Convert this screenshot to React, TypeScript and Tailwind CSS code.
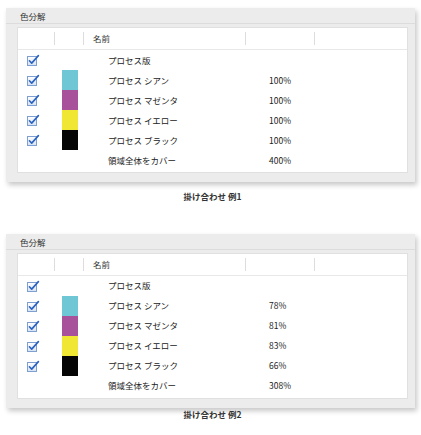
import React from 'react';

interface Row {
  name: string;
  swatch?: string;
  value?: string;
  checked: boolean;
}

interface Props {
  rows: Row[];
  caption: string;
  captionGap: string;
  top: string;
}

function CheckIcon() {
  return (
    <svg width="13" height="12" viewBox="0 0 13 12" aria-hidden>
      <defs>
        <linearGradient id="cbfill" x1="0" y1="0" x2="0" y2="1">
          <stop offset="0" stopColor="#ffffff" />
          <stop offset="1" stopColor="#d6e2f2" />
        </linearGradient>
      </defs>
      <rect x="0.5" y="2.5" width="9" height="9" fill="url(#cbfill)" stroke="#7f9fd0" />
      <path d="M2.4 6.8 L4.7 9.1 L11.4 1.6" fill="none" stroke="#2a62c0" strokeWidth="1.6" strokeLinecap="round" strokeLinejoin="round" />
    </svg>
  );
}

function SeparationPanel({ rows, caption, captionGap, top }: Props) {
  return (
    <div className={top}>
      <div className="ml-[6px] w-[409px] bg-[#ececec] shadow-[2px_3px_5px_rgba(0,0,0,0.22)]">
        <div className="h-[16px] pl-[14px] border-b border-[#dcdcdc] flex items-end text-[8.5px] leading-[14px] text-[#333]">
          色分解
        </div>
        <div className="pt-[3px] pl-[11px] pr-[7px] pb-[9px]">
          <div className="bg-white border border-[#e0e0e0]">
            <div className="flex h-[22px] border-b border-[#e8e8e8] text-[8.5px] text-[#333]">
              <div className="w-[37px] border-r border-[#dddddd] my-[4px]" />
              <div className="w-[29px] border-r border-[#dddddd] my-[4px]" />
              <div className="w-[162px] border-r border-[#dddddd] my-[4px] pl-[9px] flex items-center">名前</div>
              <div className="w-[69px] border-r border-[#dddddd] my-[4px]" />
              <div className="flex-1" />
            </div>
            <div className="pb-[2px]">
              {rows.map((r) => (
                <div key={r.name} className="flex h-[20px] items-center text-[8.5px] text-[#222]">
                  <div className="w-[37px] pl-[9px] flex items-center">
                    {r.checked && <CheckIcon />}
                  </div>
                  <div className="w-[29px] h-full pl-[7px]">
                    {r.swatch && <div className="w-[16px] h-full" style={{ backgroundColor: r.swatch }} />}
                  </div>
                  <div className="w-[162px] pl-[24px]">{r.name}</div>
                  <div className="w-[69px] pl-[23px]">{r.value}</div>
                </div>
              ))}
            </div>
          </div>
        </div>
      </div>
      <div className={`${captionGap} text-center pl-[4px] text-[8.5px] font-bold text-[#333]`}>{caption}</div>
    </div>
  );
}

const names = ['プロセス版', 'プロセス シアン', 'プロセス マゼンタ', 'プロセス イエロー', 'プロセス ブラック', '領域全体をカバー'];
const swatches = [undefined, '#6fc6d4', '#a9529c', '#f0e634', '#050505', undefined];

function makeRows(values: string[]): Row[] {
  return names.map((name, i) => ({
    name,
    swatch: swatches[i],
    value: values[i],
    checked: i < 5,
  }));
}

export default function App() {
  return (
    <div
      className="w-[421px] h-[435px] bg-white overflow-hidden"
      style={{ fontFamily: '"Noto Sans CJK JP", "Noto Sans", sans-serif' }}
    >
      <SeparationPanel
        top="pt-[8px]"
        rows={makeRows(['', '100%', '100%', '100%', '100%', '400%'])}
        caption="掛け合わせ 例1"
        captionGap="mt-[8px]"
      />
      <SeparationPanel
        top="pt-[31px]"
        rows={makeRows(['', '78%', '81%', '83%', '66%', '308%'])}
        caption="掛け合わせ 例2"
        captionGap="mt-0"
      />
    </div>
  );
}
